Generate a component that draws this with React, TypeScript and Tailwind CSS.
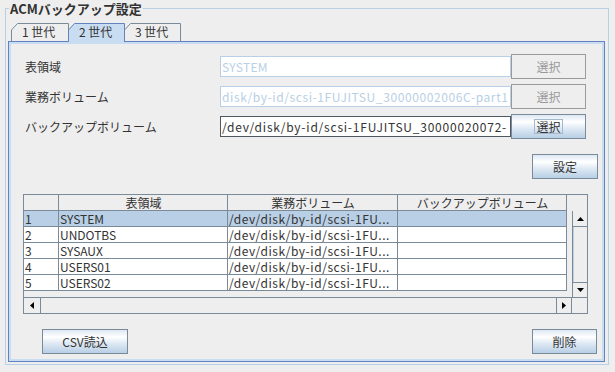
import React from "react";

const FONT = { fontFamily: '"Noto Sans CJK JP", "DejaVu Sans", sans-serif' };

const rows = [
  { no: "1", name: "SYSTEM" },
  { no: "2", name: "UNDOTBS" },
  { no: "3", name: "SYSAUX" },
  { no: "4", name: "USERS01" },
  { no: "5", name: "USERS02" },
];

const btnGrad =
  "bg-[linear-gradient(to_bottom,#dde8f3_0%,#ffffff_30%,#dde8f3_60%,#b8cfe5_100%)]";

const Tab = ({ label, width, selected }: { label: string; width: number; selected?: boolean }) => {
  const h = selected ? 19 : 18;
  return (
    <div
      className={`relative flex items-center pl-[11px] text-[12px] ${selected ? "z-10 -ml-px h-[19px] -mb-px pb-px" : "h-[18px]"} ${label.startsWith("3") ? "-ml-px" : ""}`}
      style={{ width }}
    >
      <svg className="absolute inset-0" width={width} height={h}>
        <path
          d={`M0.5 ${h} V7 L6.5 0.5 H${width - 0.5} V${h}`}
          fill={selected ? "#c8ddf2" : "#eeeeee"}
          stroke={selected ? "#6382bf" : "#7a8a99"}
        />
      </svg>
      <span className="relative">{label}</span>
    </div>
  );
};

const Field = ({ value, enabled, track }: { value: string; enabled?: boolean; track: string }) => (
  <div
    className={`w-[291px] h-[21px] bg-white border overflow-hidden whitespace-nowrap pl-[1px] text-[12px] leading-[19px] ${track} ${
      enabled ? "border-[#4e5863] text-[#333]" : "border-[#b8cfe5] text-[#b8cfe5]"
    }`}
  >
    {value}
  </div>
);

const SelectButton = ({ enabled }: { enabled?: boolean }) =>
  enabled ? (
    <div className={`w-[75px] h-[25px] border border-[#7a8a99] ${btnGrad} flex items-center justify-center text-[12px]`}>
      <span className="border border-[#a3b8cc] px-[1px] leading-[13px]">選択</span>
    </div>
  ) : (
    <div className="w-[75px] h-[25px] border border-[#9a9a9a] flex items-center justify-center text-[12px] text-[#999]">
      選択
    </div>
  );

const Button = ({ label, w }: { label: string; w: string }) => (
  <div className={`${w} h-[25px] border border-[#7a8a99] ${btnGrad} flex items-center justify-center text-[12px]`}>
    {label}
  </div>
);

const UpArrow = () => (
  <svg width="7" height="4"><path d="M3.5 0 L7 4 H0 Z" fill="#000" /></svg>
);
const DownArrow = () => (
  <svg width="7" height="4"><path d="M0 0 H7 L3.5 4 Z" fill="#000" /></svg>
);
const LeftArrow = () => (
  <svg width="4" height="7"><path d="M4 0 V7 L0 3.5 Z" fill="#000" /></svg>
);
const RightArrow = () => (
  <svg width="4" height="7"><path d="M0 0 L4 3.5 L0 7 Z" fill="#000" /></svg>
);

const cell = "border-r border-b border-[#7a8a99] h-[16px] leading-[15px] pl-[1px] overflow-hidden whitespace-nowrap";

const Table = () => (
  <div className="ml-[12px] w-[565px] h-[120px] border border-[#7a8a99] flex flex-col text-[12px]">
    <div className="flex h-[102px]">
      <div className="w-[548px]">
        <div className="flex">
          <div className={`${cell} w-[35px] h-[15px] leading-[14px]`} />
          <div className={`${cell} w-[169px] h-[15px] leading-[14px] text-center`}>表領域</div>
          <div className={`${cell} w-[170px] h-[15px] leading-[14px] text-center`}>業務ボリューム</div>
          <div className={`${cell} w-[169px] h-[15px] leading-[14px] text-center`}>バックアップボリューム</div>
        </div>
        {rows.map((r, i) => (
          <div key={r.no} className={`flex ${i === 0 ? "bg-[#b8cfe5]" : "bg-white"} w-[543px]`}>
            <div className={`${cell} w-[35px]`}>{r.no}</div>
            <div className={`${cell} w-[169px]`}>{r.name}</div>
            <div className={`${cell} w-[170px] tracking-[0.55px]`}>/dev/disk/by-id/scsi-1FU...</div>
            <div className={`${cell} w-[169px]`} />
          </div>
        ))}
      </div>
      <div className="w-[15px] mt-[16px] h-[86px] border-l border-[#7a8a99] flex flex-col">
        <div className="h-[16px] border-b border-[#7a8a99] flex items-center justify-center bg-[#eee]">
          <UpArrow />
        </div>
        <div className="flex-1 border-l border-[#b8cfe5]" />
        <div className="h-[15px] border-t border-[#7a8a99] flex items-center justify-center">
          <DownArrow />
        </div>
      </div>
    </div>
    <div className="flex h-[16px] border-t border-[#7a8a99]">
      <div className="w-[17px] border-r border-[#7a8a99] flex items-center justify-center">
        <LeftArrow />
      </div>
      <div className="flex-1" />
      <div className="w-[16px] border-l border-r border-[#7a8a99] flex items-center justify-center">
        <RightArrow />
      </div>
      <div className="w-[15px]" />
    </div>
  </div>
);

export default function App() {
  return (
    <div className="w-[615px] h-[372px] bg-[#eeeeee] pt-[8px] pl-[5px] text-[#333]" style={FONT}>
      <div className="relative w-[604px] h-[357px] border border-[#b8cfe5] pt-[14px] pl-[2px]">
        <span className="absolute left-[3px] top-[-9px] px-[1px] bg-[#eeeeee] text-[13px] font-bold leading-[17px]">
          ACMバックアップ設定
        </span>
        <div className="flex items-end pl-[3px] h-[18px]">
          <Tab label="1 世代" width={58} />
          <Tab label="2 世代" width={57} selected />
          <Tab label="3 世代" width={57} />
        </div>
        <div className="w-[597px] h-[321px] border border-[#6382bf]">
          <div className="w-full h-full border-2 border-[#c8ddf2] flex flex-col">
            <div className="mt-[10px] pl-[14px] flex flex-col gap-[5px] text-[12px]">
              {[
                { label: "表領域", value: "SYSTEM", enabled: false, track: "tracking-[0.3px]" },
                { label: "業務ボリューム", value: "disk/by-id/scsi-1FUJITSU_30000002006C-part1", enabled: false, track: "tracking-[0.6px]" },
                { label: "バックアップボリューム", value: "/dev/disk/by-id/scsi-1FUJITSU_30000020072-", enabled: true, track: "tracking-[0.78px]" },
              ].map((r) => (
                <div key={r.label} className="flex items-center h-[25px]">
                  <div className="w-[195px]">{r.label}</div>
                  <Field value={r.value} enabled={r.enabled} track={r.track} />
                  <SelectButton enabled={r.enabled} />
                </div>
              ))}
            </div>
            <div className="self-end mr-[4px] mt-[15px]">
              <Button label="設定" w="w-[66px]" />
            </div>
            <div className="mt-[15px]">
              <Table />
            </div>
            <div className="mt-[15px] flex justify-between pl-[31px] pr-[5px]">
              <Button label="CSV読込" w="w-[86px]" />
              <Button label="削除" w="w-[65px]" />
            </div>
          </div>
        </div>
      </div>
    </div>
  );
}
